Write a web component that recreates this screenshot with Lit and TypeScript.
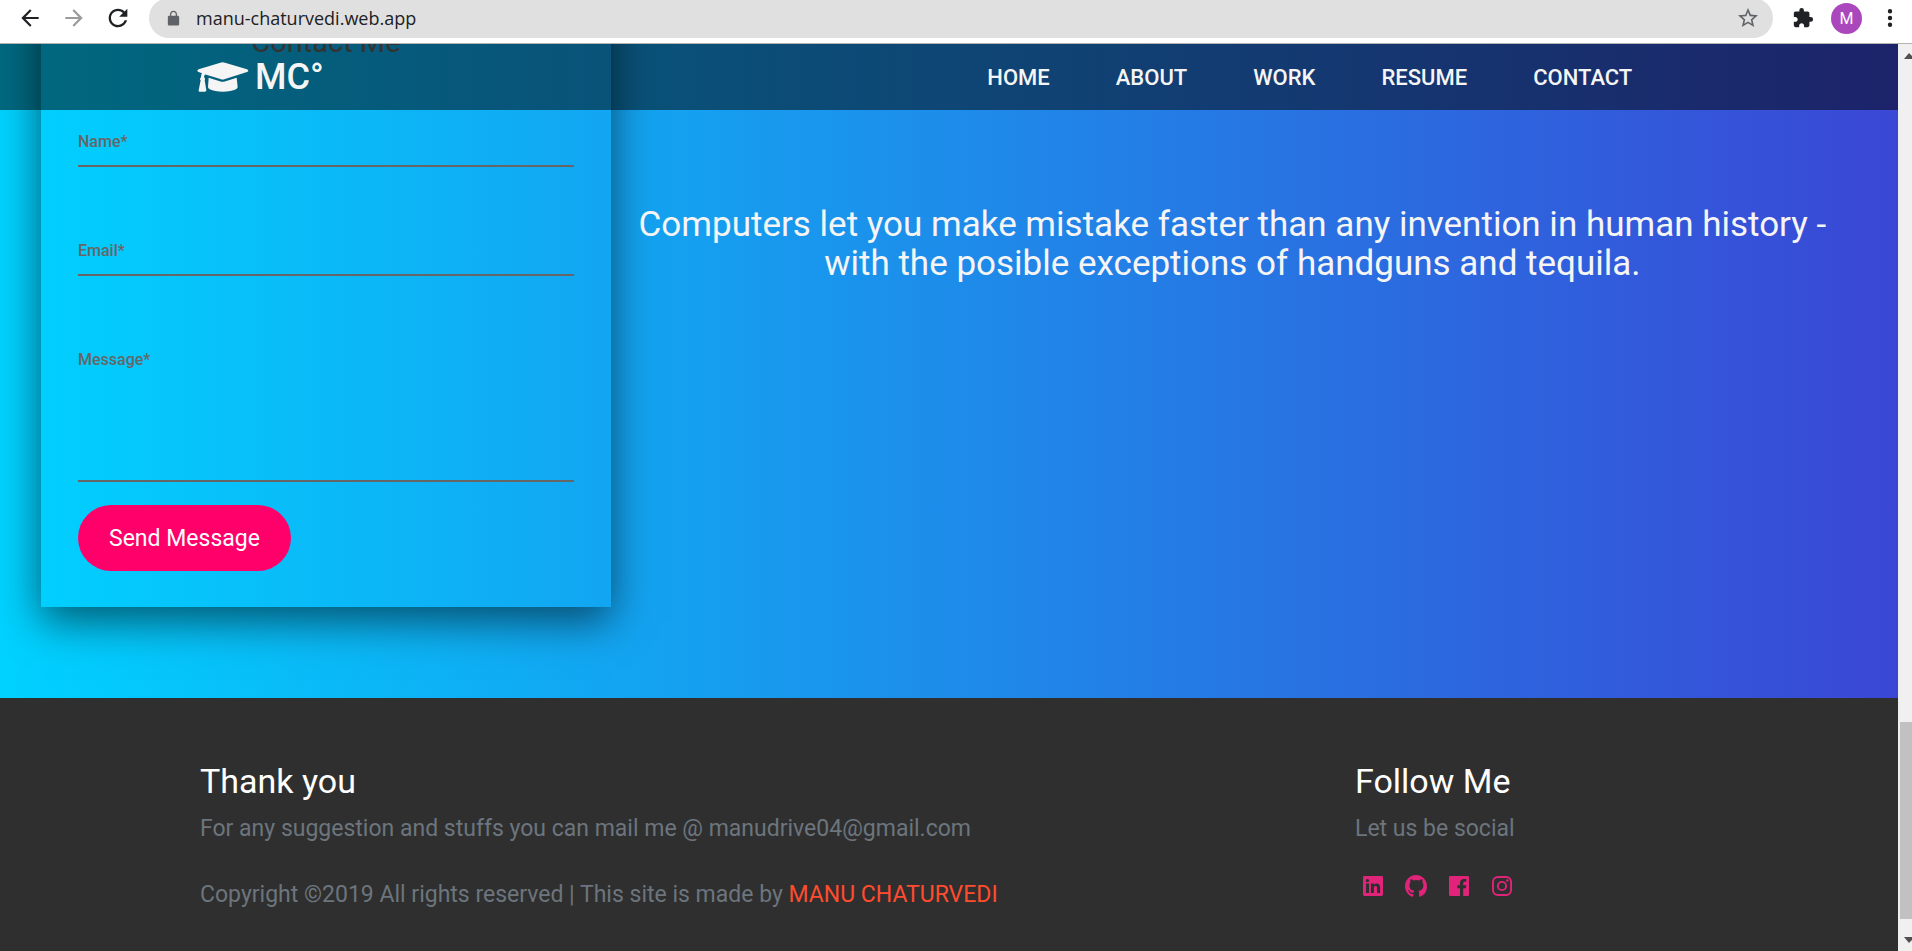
import { LitElement, html, css, svg } from "lit";
import { customElement } from "lit/decorators.js";

const icon = (size: number, path: string, viewBox = "0 0 24 24") => html`
  <svg width=${size} height=${size} viewBox=${viewBox} fill="currentColor" aria-hidden="true">
    ${svg`<path fill-rule="evenodd" d=${path}></path>`}
  </svg>
`;

const GLYPHS = {
  back: "M20 11H7.83l5.59-5.59L12 4l-8 8 8 8 1.41-1.41L7.83 13H20v-2z",
  forward: "M12 4l-1.41 1.41L16.17 11H4v2h12.17l-5.58 5.59L12 20l8-8z",
  reload:
    "M17.65 6.35C16.2 4.9 14.21 4 12 4c-4.42 0-7.99 3.58-7.99 8s3.57 8 7.99 8c3.73 0 6.84-2.55 7.73-6h-2.08c-.82 2.33-3.04 4-5.65 4-3.31 0-6-2.69-6-6s2.69-6 6-6c1.66 0 3.14.69 4.22 1.78L13 11h7V4l-2.35 2.35z",
  lock: "M18 8h-1V6c0-2.76-2.24-5-5-5S7 3.24 7 6v2H6c-1.1 0-2 .9-2 2v10c0 1.1.9 2 2 2h12c1.1 0 2-.9 2-2V10c0-1.1-.9-2-2-2zm-2.9 0H8.9V6c0-1.71 1.39-3.1 3.1-3.1s3.1 1.39 3.1 3.1v2z",
  star: "M22 9.24l-7.19-.62L12 2 9.19 8.63 2 9.24l5.46 4.73L5.82 21 12 17.27 18.18 21l-1.63-7.03L22 9.24zM12 15.4l-3.76 2.27 1-4.28-3.32-2.88 4.38-.38L12 6.1l1.71 4.04 4.38.38-3.32 2.88 1 4.28L12 15.4z",
  puzzle:
    "M20.5 11H19V7c0-1.1-.9-2-2-2h-4V3.5a2.5 2.5 0 0 0-5 0V5H4c-1.1 0-1.99.9-1.99 2v3.8H3.5c1.49 0 2.7 1.21 2.7 2.7s-1.21 2.7-2.7 2.7H2V20c0 1.1.9 2 2 2h3.8v-1.5c0-1.49 1.21-2.7 2.7-2.7s2.7 1.21 2.7 2.7V22H17c1.1 0 2-.9 2-2v-4h1.5a2.5 2.5 0 0 0 0-5z",
  dots: "M12 7.5a2.2 2.2 0 1 0 0-4.4 2.2 2.2 0 0 0 0 4.4zm0 6.7a2.2 2.2 0 1 0 0-4.4 2.2 2.2 0 0 0 0 4.4zm0 6.7a2.2 2.2 0 1 0 0-4.4 2.2 2.2 0 0 0 0 4.4z",
  linkedin:
    "M2.4 1h17.2A1.4 1.4 0 0 1 21 2.4v17.2a1.4 1.4 0 0 1-1.4 1.4H2.4A1.4 1.4 0 0 1 1 19.600V2.400A1.4 1.4 0 0 1 2.400 1zM4 8.600V18h3V8.600zM5.500 3.900a1.700 1.700 0 1 0 0 3.400 1.700 1.700 0 0 0 0-3.400zM8.900 8.600V18h3v-4.900c0-1.400.6-2.200 1.700-2.200s1.500.8 1.500 2.200V18h3v-5.600c0-2.700-1.300-4-3.400-4-1.400 0-2.300.7-2.800 1.600V8.600z",
  github:
    "M11 0C4.900 0 0 4.900 0 11.200c0 4.900 3.100 9.100 7.500 10.600.6.1.8-.2.8-.5v-2.400c-2.700.6-3.500-.7-3.700-1.300-.2-.4-.7-1.300-1.200-1.600-.4-.2-1-.8 0-.8.900 0 1.600.9 1.800 1.200 1.100 1.800 2.700 1.300 3.400 1 .1-.8.400-1.300.8-1.600-2.500-.3-5-1.300-5-5.500 0-1.200.4-2.200 1.100-3-.1-.3-.5-1.400.1-3 0 0 .9-.3 3 1.200a10 10 0 0 1 5.600 0c2.100-1.500 3-1.200 3-1.200.6 1.600.2 2.700.1 3 .7.8 1.100 1.800 1.100 3 0 4.300-2.600 5.300-5.100 5.500.4.400.8 1.100.8 2.100v3.400c0 .3.200.6.800.5A11.200 11.200 0 0 0 22 11.200C22 4.900 17.100 0 11 0z",
  facebook:
    "M2.200 1h17.600A1.200 1.200 0 0 1 21 2.200v17.600a1.200 1.200 0 0 1-1.200 1.200H15.200v-7.800h2.700l.4-3h-3.100V8.300c0-.9.300-1.500 1.500-1.500h1.600V4c-.3 0-1.300-.1-2.400-.1-2.400 0-3.900 1.400-3.900 4.100v2.200H9.300v3H12V21H2.200A1.200 1.200 0 0 1 1 19.800V2.200A1.200 1.200 0 0 1 2.200 1z",
  instagram:
    "M6.800 1h8.400A5.800 5.800 0 0 1 21 6.800v8.400a5.800 5.800 0 0 1-5.800 5.800H6.800A5.800 5.800 0 0 1 1 15.200V6.800A5.800 5.800 0 0 1 6.800 1zM7 2.900A4.100 4.100 0 0 0 2.900 7v8A4.100 4.100 0 0 0 7 19.100h8a4.100 4.100 0 0 0 4.100-4.100V7A4.100 4.100 0 0 0 15 2.900zM11 5.900a5.100 5.100 0 1 1 0 10.200 5.100 5.100 0 0 1 0-10.200zm0 1.900a3.200 3.200 0 1 0 0 6.400 3.200 3.200 0 0 0 0-6.400zM16.400 4.200a1.300 1.300 0 1 1 0 2.600 1.300 1.300 0 0 1 0-2.600z",
};

const NAV = ["Home", "About", "Work", "Resume", "Contact"];

const SOCIAL: [string, string][] = [
  ["LinkedIn", GLYPHS.linkedin],
  ["GitHub", GLYPHS.github],
  ["Facebook", GLYPHS.facebook],
  ["Instagram", GLYPHS.instagram],
];

@customElement("browser-bar")
export class BrowserBar extends LitElement {
  static styles = css`
    :host {
      display: flex;
      align-items: center;
      box-sizing: border-box;
      height: 44px;
      padding: 0 8px 7px 16px;
      border-bottom: 1px solid #b4b4b4;
      background: #fff;
      color: #202124;
      overflow: hidden;
    }
    button {
      display: grid;
      place-items: center;
      flex: none;
      width: 28px;
      height: 28px;
      padding: 0;
      border: 0;
      background: none;
      color: inherit;
    }
    .history {
      display: flex;
      gap: 16px;
      margin-right: 17px;
    }
    .muted {
      color: #9a9b9d;
    }
    .address {
      display: flex;
      flex: 1;
      align-items: center;
      box-sizing: border-box;
      height: 40px;
      padding: 0 11px 0 16px;
      border-radius: 20px;
      background: #e0e0e0;
      color: #5f6368;
    }
    .url {
      flex: 1;
      min-width: 0;
      padding: 0;
      margin-left: 14px;
      border: 0;
      background: none;
      color: #202124;
      font: 18px/24px "Open Sans", "Noto Sans", sans-serif;
    }
    .tools {
      display: flex;
      align-items: center;
      gap: 14px;
      margin-left: 16px;
    }
    .avatar {
      width: 31px;
      height: 31px;
      border-radius: 50%;
      background: #ab47bc;
      color: #fff;
      font: 16px/31px Roboto, sans-serif;
    }
  `;

  render() {
    return html`
      <div class="history">
        <button aria-label="Back">${icon(26, GLYPHS.back)}</button>
        <button class="muted" aria-label="Forward">${icon(26, GLYPHS.forward)}</button>
        <button aria-label="Reload">${icon(28, GLYPHS.reload)}</button>
      </div>
      <div class="address">
        ${icon(17, GLYPHS.lock)}
        <input class="url" aria-label="Address" value="manu-chaturvedi.web.app" />
        <button aria-label="Bookmark">${icon(24, GLYPHS.star)}</button>
      </div>
      <div class="tools">
        <button aria-label="Extensions">${icon(22, GLYPHS.puzzle)}</button>
        <button class="avatar" aria-label="Profile">M</button>
        <button aria-label="Menu">${icon(24, GLYPHS.dots)}</button>
      </div>
    `;
  }
}

@customElement("site-nav")
export class SiteNav extends LitElement {
  static styles = css`
    :host {
      display: flex;
      align-items: center;
      justify-content: space-between;
      box-sizing: border-box;
      height: 66px;
      padding: 0 14% 0 197px;
      background: rgba(0, 0, 0, 0.5);
      font-family: Roboto, sans-serif;
    }
    a {
      color: #f5f5f5;
      text-decoration: none;
    }
    .brand {
      display: flex;
      align-items: center;
      gap: 6px;
      font-size: 36px;
      font-weight: 500;
      line-height: 48px;
    }
    .links {
      display: flex;
      gap: 66px;
      margin: 0;
      padding: 0;
      list-style: none;
      font-size: 22px;
      font-weight: 500;
      text-transform: uppercase;
    }
  `;

  render() {
    return html`
      <a class="brand" href="#home">
        <svg width="52" height="30" viewBox="0 0 156 90" fill="currentColor" aria-hidden="true">
          <path d="M70 2q7-3 14 0l66 20q8 4 0 8L84 51q-7 3-14 0L28 38q-5-1-6 3l-1 5q5 4 2 9l5 30q0 4-4 4H8q-4 0-3-4l6-30q-4-5 1-9 0-9 3-12L5 30q-8-4 0-8z"></path>
          <path d="M35 47l38 12q4 1 8 0l38-12 3 29q-2 8-22 11-23 4-45 0-20-3-22-11z"></path>
        </svg>
        <span>MC°</span>
      </a>
      <ul class="links">
        ${NAV.map((name) => html`<li><a href="#${name.toLowerCase()}">${name}</a></li>`)}
      </ul>
    `;
  }
}

@customElement("contact-section")
export class ContactSection extends LitElement {
  static styles = css`
    :host {
      display: grid;
      grid-template-columns: minmax(0, 11fr) minmax(0, 24fr);
      align-items: start;
      padding: 40px 44px 91px 41px;
      background: linear-gradient(to right, #00d2ff, #3a47d5);
    }
    .card {
      padding: 36px 37px;
      box-shadow: 0 14px 40px rgba(0, 0, 0, 0.56);
      color: #666;
    }
    .title {
      margin: 0 0 70px;
      font-size: 29px;
      font-weight: 400;
      line-height: 38px;
      text-align: center;
    }
    .field {
      display: flex;
      flex-direction: column;
      margin-bottom: 73px;
    }
    .field.last {
      margin-bottom: 23px;
    }
    label {
      font-size: 16px;
      font-weight: 500;
      line-height: 22px;
    }
    input,
    textarea {
      box-sizing: border-box;
      width: 100%;
      height: 14px;
      padding: 0;
      border: 0;
      border-bottom: 2px solid #666;
      background: none;
      font: inherit;
      outline: 0;
      resize: none;
    }
    textarea {
      height: 111px;
    }
    .send {
      height: 66px;
      padding: 0 31px;
      border: 0;
      border-radius: 33px;
      background: #ff006a;
      color: #fff;
      font-family: inherit;
      font-size: 23px;
    }
    .quote {
      margin: 218px 0 0;
      padding: 0 15px;
      color: #f5f5f5;
      font-size: 35px;
      line-height: 39px;
      text-align: center;
    }
  `;

  render() {
    return html`
      <form class="card">
        <h2 class="title">Contact Me</h2>
        <div class="field">
          <label for="name">Name*</label>
          <input id="name" type="text" />
        </div>
        <div class="field">
          <label for="email">Email*</label>
          <input id="email" type="email" />
        </div>
        <div class="field last">
          <label for="message">Message*</label>
          <textarea id="message"></textarea>
        </div>
        <button class="send" type="button">Send Message</button>
      </form>
      <p class="quote">
        Computers let you make mistake faster than any invention in human history -
        with the posible exceptions of handguns and tequila.
      </p>
    `;
  }
}

@customElement("site-footer")
export class SiteFooter extends LitElement {
  static styles = css`
    :host {
      display: grid;
      grid-template-columns: minmax(0, 1fr) 343px;
      padding: 64px 200px 40px;
      background: #2f2f2f;
      color: #6c757d;
      font-size: 23px;
      line-height: 32px;
    }
    h3 {
      margin: 0 0 13px;
      color: #fff;
      font-size: 34px;
      font-weight: 400;
      line-height: 38px;
    }
    p {
      margin: 0;
    }
    .legal {
      margin-top: 34px;
    }
    .author {
      color: #ff4c2e;
      text-decoration: none;
    }
    .social {
      display: flex;
      gap: 21px;
      margin: 29px 0 0 7px;
    }
    .social a {
      display: flex;
      align-items: center;
      height: 24px;
      color: #e0247a;
    }
  `;

  render() {
    return html`
      <div>
        <h3>Thank you</h3>
        <p>For any suggestion and stuffs you can mail me @ manudrive04@gmail.com</p>
        <p class="legal">
          Copyright ©2019 All rights reserved | This site is made by
          <a class="author" href="#home">MANU CHATURVEDI</a>
        </p>
      </div>
      <div>
        <h3>Follow Me</h3>
        <p>Let us be social</p>
        <div class="social">
          ${SOCIAL.map(
            ([name, path]) => html`<a href="#${name.toLowerCase()}" aria-label=${name}>${icon(22, path, "0 0 22 22")}</a>`
          )}
        </div>
      </div>
    `;
  }
}

@customElement("app-root")
export class AppRoot extends LitElement {
  static styles = css`
    :host {
      display: flex;
      flex-direction: column;
      height: 100vh;
      overflow: hidden;
      font-family: Roboto, "Noto Sans", sans-serif;
    }
    browser-bar {
      flex: none;
    }
    .window {
      display: flex;
      flex: 1;
      min-height: 0;
    }
    /* The page is scrolled to its end, so its content rests on the bottom edge. */
    .viewport {
      position: relative;
      display: flex;
      flex: 1;
      flex-direction: column;
      justify-content: flex-end;
      min-width: 0;
      overflow: hidden;
    }
    contact-section,
    site-footer {
      flex: none;
    }
    site-nav {
      position: absolute;
      top: 0;
      left: 0;
      right: 0;
    }
    .scrollbar {
      display: flex;
      flex-direction: column;
      align-items: flex-end;
      width: 14px;
      background: #f0f0f0;
      color: #505050;
    }
    .scrollbar svg {
      flex: none;
    }
    .track {
      display: flex;
      flex: 1;
      align-items: flex-end;
      padding-bottom: 12px;
    }
    .thumb {
      width: 12px;
      height: 23%;
      background: #c1c1c1;
    }
  `;

  render() {
    return html`
      <browser-bar></browser-bar>
      <div class="window">
        <main class="viewport">
          <contact-section></contact-section>
          <site-footer></site-footer>
          <site-nav></site-nav>
        </main>
        <div class="scrollbar" aria-hidden="true">
          <svg width="14" height="20" viewBox="0 0 14 20" fill="currentColor"><path d="M6 15l5-6 3 3v3z"></path></svg>
          <div class="track"><div class="thumb"></div></div>
          <svg width="14" height="20" viewBox="0 0 14 20" fill="currentColor"><path d="M6 6l5 6 3-3V6z"></path></svg>
        </div>
      </div>
    `;
  }
}
